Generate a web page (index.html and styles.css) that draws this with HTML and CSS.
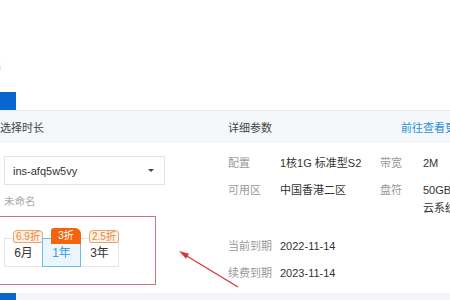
FILE: index.html
```html
<!DOCTYPE html>
<html lang="zh-CN">
<head>
    <meta charset="UTF-8">
    <title>续费</title>
    <link rel="stylesheet" href="styles.css">
</head>
<body>
<div class="page">
    <div class="top"><span class="cut">名</span></div>
    <div class="bar-row"><span class="btn-blue"></span></div>

    <div class="panel">
        <div class="panel-head">
            <div class="col-left">选择时长</div>
            <div class="col-right head-right">
                <span>详细参数</span>
                <a class="more">前往查看更多</a>
            </div>
        </div>

        <div class="panel-body">
            <div class="col-left">
                <div class="select">
                    <span>ins-afq5w5vy</span>
                    <span class="caret"></span>
                </div>
                <div class="alias">未命名</div>

                <div class="duration">
                    <div class="tab">
                        <span class="badge">6.9折</span>
                        6月
                    </div>
                    <div class="tab active">
                        <span class="badge hot">3折</span>
                        1年
                    </div>
                    <div class="tab">
                        <span class="badge">2.5折</span>
                        3年
                    </div>
                </div>
            </div>

            <div class="col-right">
                <div class="specs">
                    <span class="label">配置</span>
                    <span class="value">1核1G 标准型S2</span>
                    <span class="label">带宽</span>
                    <span class="value">2M</span>

                    <span class="label">可用区</span>
                    <span class="value">中国香港二区</span>
                    <span class="label">盘符</span>
                    <span class="value">50GB<br>云系统盘</span>
                </div>

                <div class="expire">
                    <span class="label">当前到期</span>
                    <span class="value">2022-11-14</span>
                    <span class="label">续费到期</span>
                    <span class="value">2023-11-14</span>
                </div>
            </div>
        </div>
    </div>

    <div class="bottom"><span class="btn-blue"></span></div>

    <svg class="arrow" width="450" height="300" viewBox="0 0 450 300">
        <line x1="238" y1="287" x2="186" y2="255.5" stroke="#d8363c" stroke-width="1.3"/>
        <polygon points="179,251 189.1,253.7 186,258.8" fill="#d8363c"/>
    </svg>
</div>
</body>
</html>
```

FILE: styles.css
```css
body {
    margin: 0;
    font-family: "Liberation Sans", "Noto Sans CJK SC", sans-serif;
    font-size: 11px;
    color: #333;
    background: #fff;
    overflow: hidden;
}

.page {
    position: relative;
    width: 450px;
    height: 300px;
    overflow: hidden;
}

.top {
    height: 92px;
}

.cut {
    display: inline-block;
    margin-top: 56px;
    margin-left: -10px;
    font-size: 12px;
    color: #bbb;
}

.bar-row {
    height: 18px;
}

.btn-blue {
    display: block;
    width: 16px;
    height: 18px;
    background: #0a66cf;
}

.panel-head {
    display: flex;
    height: 33px;
    align-items: center;
    background: #f4f8fb;
    border-top: 1px solid #e8edf2;
    box-sizing: border-box;
    font-size: 11px;
    color: #444;
}

.col-left {
    width: 228px;
    flex-shrink: 0;
}

.col-right {
    flex: 1;
    white-space: nowrap;
}

.head-right {
    display: flex;
    gap: 129px;
}

.more {
    color: #2f8cd8;
}

.panel-body {
    display: flex;
    height: 150px;
}

.panel-body .col-left {
    padding-top: 13px;
}

.select {
    display: flex;
    align-items: center;
    justify-content: space-between;
    width: 161px;
    height: 29px;
    margin-left: 4px;
    padding: 0 10px 0 8px;
    box-sizing: border-box;
    border: 1px solid #e4e4e4;
    font-size: 11px;
    color: #333;
}

.caret {
    width: 0;
    height: 0;
    border-left: 3px solid transparent;
    border-right: 3px solid transparent;
    border-top: 3px solid #444;
}

.alias {
    margin: 8px 0 0 4px;
    color: #aaa;
    font-size: 10.5px;
}

.duration {
    display: flex;
    width: 157px;
    height: 69px;
    margin: 8px 0 0 -1px;
    padding: 21px 0 0 4px;
    box-sizing: border-box;
    border: 1.5px solid #c8767b;
}

.tab {
    position: relative;
    width: 39px;
    height: 29px;
    line-height: 28px;
    text-align: center;
    box-sizing: border-box;
    border: 1px solid #e6e6e6;
    margin-left: -1px;
    font-size: 12px;
    color: #333;
}

.tab:first-child {
    margin-left: 0;
}

.tab.active {
    border-color: #6cc0e2;
    background: #eaf6fb;
    color: #3b9bd8;
    z-index: 1;
}

.badge {
    position: absolute;
    left: 8px;
    top: -9px;
    height: 13px;
    padding: 0 2px;
    line-height: 12px;
    font-size: 10px;
    white-space: nowrap;
    box-sizing: border-box;
    border: 1px solid #e9a46f;
    border-radius: 4px 4px 2px 2px;
    background: #fdf1e3;
    color: #e5883f;
}

.badge.hot {
    top: -11px;
    width: 30px;
    height: 16px;
    line-height: 15px;
    border: none;
    border-radius: 3px 6px 0 0;
    background: #f2640e;
    color: #fff;
}

.specs,
.expire {
    display: grid;
    grid-template-columns: 52px 100px 43px auto;
    row-gap: 9px;
    line-height: 18px;
    padding-top: 11px;
}

.expire {
    grid-template-columns: 52px auto;
    padding-top: 20px;
}

.label {
    color: #999;
}

.value {
    color: #333;
}

.bottom {
    height: 8px;
    background: #f3f5f8;
}

.arrow {
    position: absolute;
    left: 0;
    top: 0;
}
```
